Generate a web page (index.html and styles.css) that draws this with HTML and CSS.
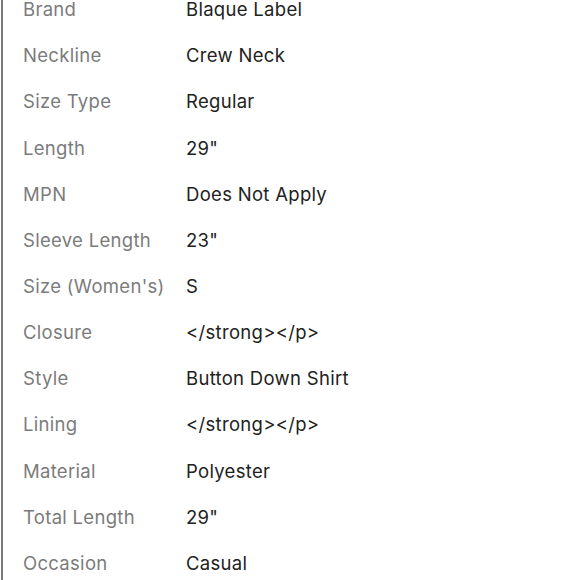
FILE: index.html
```html
<!DOCTYPE html>
<html>
<head>
<meta charset="utf-8">
<link rel="stylesheet" href="styles.css">
</head>
<body>
<div class="panel">
  <dl class="specs">
    <div class="row"><dt>Brand</dt><dd>Blaque Label</dd></div>
    <div class="row"><dt>Neckline</dt><dd>Crew Neck</dd></div>
    <div class="row"><dt>Size Type</dt><dd>Regular</dd></div>
    <div class="row"><dt>Length</dt><dd>29"</dd></div>
    <div class="row"><dt>MPN</dt><dd>Does Not Apply</dd></div>
    <div class="row"><dt>Sleeve Length</dt><dd>23"</dd></div>
    <div class="row"><dt>Size (Women's)</dt><dd>S</dd></div>
    <div class="row"><dt>Closure</dt><dd>&lt;/strong&gt;&lt;/p&gt;</dd></div>
    <div class="row"><dt>Style</dt><dd>Button Down Shirt</dd></div>
    <div class="row"><dt>Lining</dt><dd>&lt;/strong&gt;&lt;/p&gt;</dd></div>
    <div class="row"><dt>Material</dt><dd>Polyester</dd></div>
    <div class="row"><dt>Total Length</dt><dd>29"</dd></div>
    <div class="row"><dt>Occasion</dt><dd>Casual</dd></div>
  </dl>
</div>
</body>
</html>
```
FILE: styles.css
```css
html, body {
  margin: 0;
  padding: 0;
  background: #fff;
  height: 100%;
  overflow: hidden;
}
.panel {
  display: flow-root;
  margin-left: 1px;
  border-left: 2px solid #7a7a7a;
  height: 100%;
  padding-left: 20px;
}
.specs {
  margin: -14px 0 0 0;
  font-family: Inter, "Liberation Sans", sans-serif;
  font-size: 18.5px;
  letter-spacing: 0.3px;
}
.row {
  display: grid;
  grid-template-columns: 163px 1fr;
  height: 46.17px;
  align-items: center;
}
dt {
  color: #7b7b7b;
  margin: 0;
}
dd {
  color: #222;
  margin: 0;
}
```
